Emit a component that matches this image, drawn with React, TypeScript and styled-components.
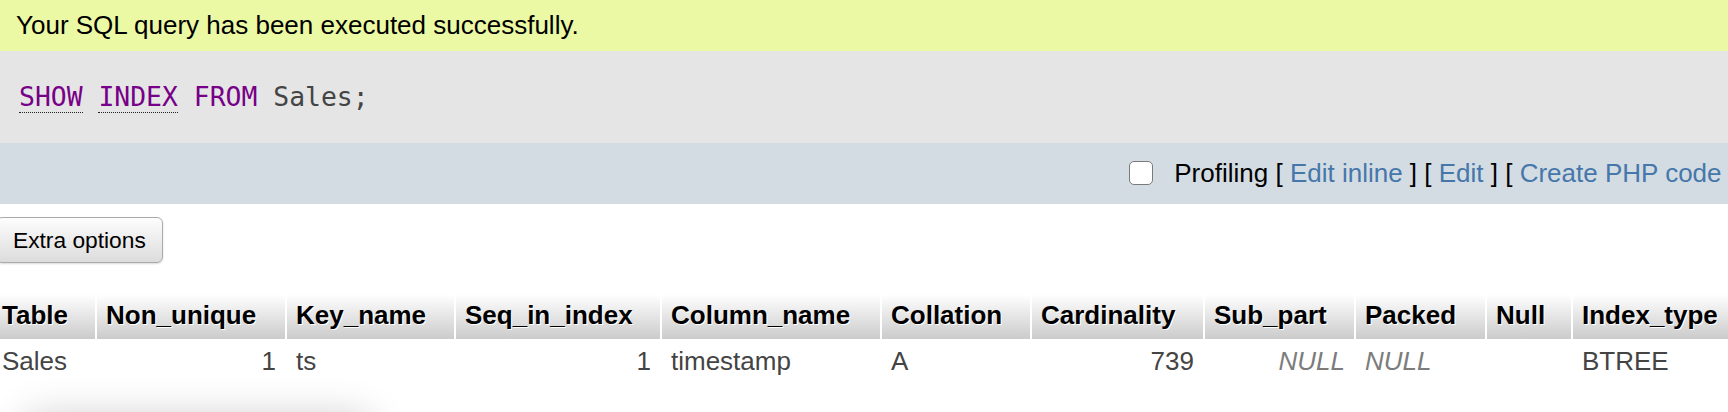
import * as React from "react";
import styled, { createGlobalStyle } from "styled-components";

const GlobalStyle = createGlobalStyle`
  html, body {
    margin: 0;
    padding: 0;
    background: #fff;
    overflow: hidden;
  }

  body {
    font-family: "Liberation Sans", Arial, Helvetica, sans-serif;
    color: #444;
  }
`;

const Page = styled.div`
  margin: 0 -16px 0 -7px;
`;

const SuccessMessage = styled.div`
  padding: 9px 23px 10px;
  background: #ebf8a4;
  color: #000;
  font-size: 26px;
  line-height: 32px;
`;

const SqlBox = styled.div`
  padding: 30px 26px;
  background: #e5e5e5;
  color: #444;
  font-family: "DejaVu Sans Mono", "Liberation Mono", monospace;
  font-size: 26.4px;
  line-height: 32px;
  white-space: pre;
`;

const Keyword = styled.span<{ $doc?: boolean }>`
  color: #708;
  border-bottom: ${(p) => (p.$doc ? "1.5px dotted #222" : "none")};
`;

const Toolbar = styled.div`
  display: flex;
  justify-content: flex-end;
  align-items: center;
  padding: 14px 8px 15px;
  background: #d3dce3;
  color: #000;
  font-size: 26px;
  line-height: 32px;
  white-space: nowrap;
`;

const Checkbox = styled.input.attrs({ type: "checkbox" })`
  appearance: none;
  box-sizing: border-box;
  width: 24px;
  height: 24px;
  margin: 0 21px 0 0;
  border: 1.5px solid #7a7a7a;
  border-radius: 5px;
  background: #fff;
`;

const ToolLink = styled.a`
  color: #4677aa;
  text-decoration: none;
`;

const ExtraButton = styled.button`
  display: block;
  box-sizing: border-box;
  height: 46px;
  margin: 13px 0 0 3px;
  padding: 9px 16px;
  border: 1px solid #aaa;
  border-radius: 6px;
  background: linear-gradient(#fdfdfd, #dcdcdc);
  box-shadow: 0 1px 2px rgba(0, 0, 0, 0.15);
  color: #000;
  font-family: inherit;
  font-size: 22.75px;
  line-height: 26px;
`;

const ResultTable = styled.table`
  width: 100%;
  margin-top: 32px;
  border-collapse: separate;
  border-spacing: 0;
  table-layout: fixed;
  font-size: 26px;
  line-height: 30px;
`;

const HeadCell = styled.th`
  box-sizing: border-box;
  padding: 5px 9px 9px;
  background: linear-gradient(#fefefe, #cbcbcb);
  color: #000;
  font-weight: bold;
  text-align: left;
  text-shadow: 1px 1px 0 #fff;
  white-space: nowrap;
  overflow: hidden;

  & + & {
    border-left: 2px solid #fff;
  }
`;

const Cell = styled.td<{ $numeric?: boolean; $null?: boolean }>`
  box-sizing: border-box;
  padding: 7px 9px;
  color: ${(p) => (p.$null ? "#7c7c7c" : "#444")};
  font-style: ${(p) => (p.$null ? "italic" : "normal")};
  text-align: ${(p) => (p.$numeric ? "right" : "left")};
  white-space: nowrap;

  & + & {
    border-left: 2px solid transparent;
  }
`;

const OperationsPanel = styled.div`
  width: 345px;
  height: 120px;
  margin: 34px 0 0 32px;
  border-radius: 8px;
  background: #fff;
  box-shadow: 0 0 40px rgba(0, 0, 0, 0.2);
`;

const columns = [
  { name: "Table", width: 102 },
  { name: "Non_unique", width: 190 },
  { name: "Key_name", width: 169 },
  { name: "Seq_in_index", width: 206 },
  { name: "Column_name", width: 220 },
  { name: "Collation", width: 150 },
  { name: "Cardinality", width: 173 },
  { name: "Sub_part", width: 151 },
  { name: "Packed", width: 131 },
  { name: "Null", width: 86 },
  { name: "Index_type", width: 173 },
];

type Value = { text: string; numeric?: boolean; isNull?: boolean };

const row: Value[] = [
  { text: "Sales" },
  { text: "1", numeric: true },
  { text: "ts" },
  { text: "1", numeric: true },
  { text: "timestamp" },
  { text: "A" },
  { text: "739", numeric: true },
  { text: "NULL", numeric: true, isNull: true },
  { text: "NULL", isNull: true },
  { text: "" },
  { text: "BTREE" },
];

export default function App() {
  return (
    <>
      <GlobalStyle />
      <Page>
        <SuccessMessage>Your SQL query has been executed successfully.</SuccessMessage>
        <SqlBox>
          <Keyword $doc>SHOW</Keyword> <Keyword $doc>INDEX</Keyword> <Keyword>FROM</Keyword> Sales;
        </SqlBox>
        <Toolbar>
          <Checkbox />
          <span>
            Profiling [ <ToolLink href="#">Edit inline</ToolLink> ] [ <ToolLink href="#">Edit</ToolLink> ] [{" "}
            <ToolLink href="#">Create PHP code</ToolLink> ]
          </span>
        </Toolbar>
        <ExtraButton>Extra options</ExtraButton>
        <ResultTable>
          <colgroup>
            {columns.map((c) => (
              <col key={c.name} style={{ width: c.width }} />
            ))}
          </colgroup>
          <thead>
            <tr>
              {columns.map((c) => (
                <HeadCell key={c.name}>{c.name}</HeadCell>
              ))}
            </tr>
          </thead>
          <tbody>
            <tr>
              {row.map((v, i) => (
                <Cell key={i} $numeric={v.numeric} $null={v.isNull}>
                  {v.text}
                </Cell>
              ))}
            </tr>
          </tbody>
        </ResultTable>
        <OperationsPanel />
      </Page>
    </>
  );
}
